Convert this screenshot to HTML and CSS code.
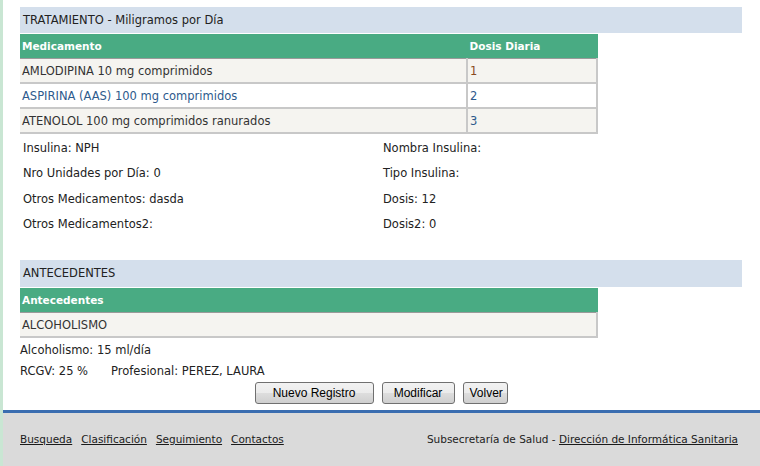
FILE: index.html
```html
<!DOCTYPE html>
<html>
<head>
<meta charset="utf-8">
<link rel="stylesheet" href="styles.css">
</head>
<body>
<div class="page">
  <div class="content">
    <div class="band">TRATAMIENTO - Miligramos por Día</div>
    <table class="grid">
      <thead>
        <tr><th class="c1">Medicamento</th><th class="c2">Dosis Diaria</th></tr>
      </thead>
      <tbody>
        <tr class="odd"><td>AMLODIPINA 10 mg comprimidos</td><td class="num brown">1</td></tr>
        <tr class="even"><td class="blue">ASPIRINA (AAS) 100 mg comprimidos</td><td class="num blue">2</td></tr>
        <tr class="odd"><td>ATENOLOL 100 mg comprimidos ranurados</td><td class="num blue">3</td></tr>
      </tbody>
    </table>
    <div class="info">
      <div class="info-cell">Insulina: NPH</div>
      <div class="info-cell">Nombra Insulina:</div>
      <div class="info-cell">Nro Unidades por Día: 0</div>
      <div class="info-cell">Tipo Insulina:</div>
      <div class="info-cell">Otros Medicamentos: dasda</div>
      <div class="info-cell">Dosis: 12</div>
      <div class="info-cell">Otros Medicamentos2:</div>
      <div class="info-cell">Dosis2: 0</div>
    </div>
    <div class="band band2">ANTECEDENTES</div>
    <table class="grid">
      <thead>
        <tr><th>Antecedentes</th></tr>
      </thead>
      <tbody>
        <tr class="odd"><td>ALCOHOLISMO</td></tr>
      </tbody>
    </table>
    <div class="line first">Alcoholismo: 15 ml/día</div>
    <div class="line rcgv"><span>RCGV: 25 %</span><span class="prof">Profesional: PEREZ, LAURA</span></div>
    <div class="buttons">
      <button class="btn">Nuevo Registro</button>
      <button class="btn">Modificar</button>
      <button class="btn">Volver</button>
    </div>
  </div>
  <footer class="footer">
    <nav class="links">
      <a href="#">Busqueda</a>
      <a href="#">Clasificación</a>
      <a href="#">Seguimiento</a>
      <a href="#">Contactos</a>
    </nav>
    <div class="credits">Subsecretaría de Salud - <a href="#">Dirección de Informática Sanitaria</a></div>
  </footer>
</div>
</body>
</html>
```
FILE: styles.css
```css
html, body {
  margin: 0;
  padding: 0;
  background: #ffffff;
}
body {
  font-family: "DejaVu Sans", Tahoma, sans-serif;
  font-size: 11.5px;
  color: #333333;
  border-left: 3px solid #c9e6d3;
  height: 466px;
  box-sizing: border-box;
  overflow: hidden;
}
.page {
  display: flex;
  flex-direction: column;
  height: 100%;
}
.content {
  padding: 7px 18px 0 17px;
}
.band {
  background: #d4dfec;
  height: 26px;
  line-height: 26px;
  padding-left: 3px;
  color: #222;
}
.band2 {
  margin-top: 22px;
  height: 27px;
  line-height: 27px;
}
.grid {
  border-collapse: collapse;
  width: 578px;
  margin-top: 1px;
}
.grid th {
  background: #49ab83;
  color: #ffffff;
  font-weight: bold;
  font-size: 10.5px;
  text-align: left;
  height: 24px;
  padding: 0 2px;
  border-right: 1px solid #49ab83;
  border-bottom: 1px solid #9a9a9a;
}
.grid th.c2 {
  border-left: 1px solid #c8c8c8;
  width: 125px;
}
.grid td {
  height: 22px;
  padding: 1px 2px 0;
  border-bottom: 2px solid #c8c8c8;
}
.grid td.num {
  border-left: 2px solid #c8c8c8;
}
.grid tr td:last-child {
  border-right: 2px solid #c8c8c8;
}
.grid tr.odd td { background: #f5f4f0; }
.grid tr.even td { background: #ffffff; }
.blue { color: #2e5a8c; }
.brown { color: #8a4a1c; }
.info {
  display: grid;
  grid-template-columns: 360px 1fr;
  padding: 2px 0 0 3px;
}
.info-cell {
  height: 25.4px;
  line-height: 25.4px;
  color: #222;
}
.line {
  height: 21px;
  line-height: 21px;
  color: #222;
}
.line.first {
  margin-top: 2px;
}
.rcgv {
  display: flex;
}
.prof {
  margin-left: 23px;
}
.buttons {
  display: flex;
  justify-content: center;
  gap: 8px;
  margin-top: 0;
}
.btn {
  font-family: "Liberation Sans", Arial, sans-serif;
  font-size: 12px;
  color: #000;
  height: 22px;
  padding: 0 6px;
  border: 1px solid #707070;
  border-radius: 3px;
  background: linear-gradient(#f2f2f2 0%, #ebebeb 50%, #dddddd 51%, #cfcfcf 100%);
}
.btn:nth-child(1) { width: 119px; }
.btn:nth-child(2) { width: 73px; }
.btn:nth-child(3) { width: 45px; }
.footer {
  margin-top: 6px;
  border-top: 3px solid #3a6db0;
  background: #dadada;
  flex: 1;
  display: flex;
  justify-content: space-between;
  align-items: center;
  padding: 0 22px 0 17px;
  font-size: 10.5px;
}
.footer a {
  color: #1a1a1a;
  text-decoration: underline;
}
.links {
  display: flex;
  gap: 9px;
}
.credits {
  color: #222;
}
```
